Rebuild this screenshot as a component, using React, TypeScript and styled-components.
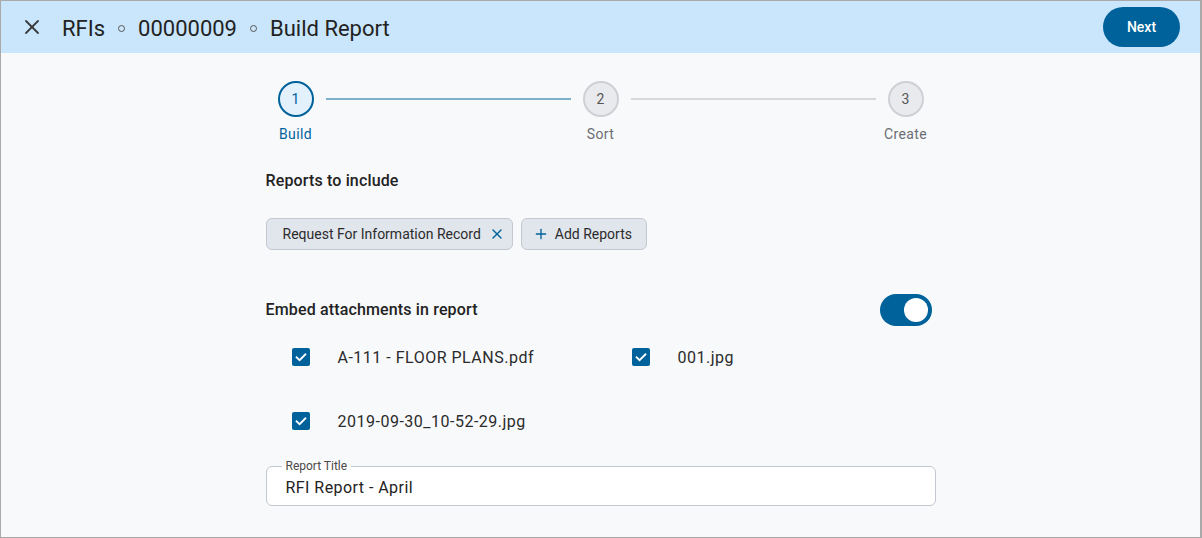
import { createGlobalStyle } from "styled-components"
import styled from "styled-components"
import { Fragment } from "react"
import { X, Plus } from "lucide-react"

const GlobalStyle = createGlobalStyle`
  html, body {
    margin: 0;
    padding: 0;
    background: #ffffff;
  }
  body {
    font-family: Roboto, "Noto Sans", Arial, sans-serif;
    color: #1f1f1f;
  }
  * {
    box-sizing: border-box;
  }
`

const primary = "#00629b"

const Frame = styled.div`
  width: 1202px;
  height: 538px;
  border: 1px solid #a9a9a9;
  border-right-width: 2px;
  background: #f8f9fb;
  display: flex;
  flex-direction: column;
  overflow: hidden;
`

const Header = styled.header`
  height: 52px;
  flex: none;
  background: #cae6fc;
  display: flex;
  align-items: center;
  padding: 0 20px 0 19px;
`

const CloseButton = styled.button`
  border: none;
  background: transparent;
  padding: 0;
  width: 24px;
  height: 24px;
  display: flex;
  align-items: center;
  justify-content: center;
  color: #3a3a3a;
  cursor: pointer;
`

const Breadcrumbs = styled.div`
  display: flex;
  align-items: center;
  gap: 13px;
  margin-left: 18px;
  margin-top: 2px;
  font-size: 22px;
  color: #222;
  flex: 1;
`

const Dot = styled.span`
  width: 7px;
  height: 7px;
  border-radius: 50%;
  border: 1.5px solid #555;
`

const NextButton = styled.button`
  height: 40px;
  width: 77px;
  border: none;
  border-radius: 20px;
  background: ${primary};
  color: #fff;
  font-family: inherit;
  font-size: 14px;
  font-weight: 500;
  cursor: pointer;
`

const Body = styled.main`
  flex: 1;
  display: flex;
  justify-content: center;
  padding-top: 28px;
`

const Column = styled.div`
  width: 670px;
  display: flex;
  flex-direction: column;
`

const Stepper = styled.div`
  display: flex;
  align-items: flex-start;
`

const Step = styled.div`
  width: 60px;
  display: flex;
  flex-direction: column;
  align-items: center;
`

const StepCircle = styled.div<{ $active?: boolean }>`
  width: 36px;
  height: 36px;
  border-radius: 50%;
  display: flex;
  align-items: center;
  justify-content: center;
  font-size: 14px;
  border: 2px solid ${p => (p.$active ? primary : "#cdd0d5")};
  background: ${p => (p.$active ? "#e3f1fd" : "#e9eaed")};
  color: ${p => (p.$active ? primary : "#555")};
`

const StepLabel = styled.div<{ $active?: boolean }>`
  margin-top: 7px;
  font-size: 14px;
  line-height: 20px;
  letter-spacing: 0.4px;
  color: ${p => (p.$active ? primary : "#6b6d72")};
`

const Connector = styled.div<{ $done?: boolean }>`
  flex: 1;
  height: 2px;
  margin-top: 17px;
  background: ${p => (p.$done ? "#7fb0c9" : "#d6d7da")};
`

const SectionTitle = styled.div`
  font-size: 16px;
  font-weight: 500;
  line-height: 24px;
  letter-spacing: 0.15px;
  color: #222;
`

const ReportsTitle = styled(SectionTitle)`
  margin-top: 25px;
`

const ChipRow = styled.div`
  display: flex;
  gap: 8px;
  margin-top: 25px;
`

const Chip = styled.div<{ $lead?: boolean }>`
  height: 32px;
  display: flex;
  align-items: center;
  gap: ${p => (p.$lead ? "6px" : "8px")};
  padding: ${p => (p.$lead ? "0 14px 0 11px" : "0 7px 0 16px")};
  background: #e1e5ec;
  border: 1px solid #c3c7cf;
  border-radius: 6px;
  font-size: 14px;
  color: #2b2b2b;
`

const ChipIcon = styled.span`
  display: flex;
  color: ${primary};
`

const EmbedRow = styled.div`
  display: flex;
  align-items: center;
  justify-content: space-between;
  margin-top: 44px;
  padding-right: 4px;
`

const Toggle = styled.div`
  width: 52px;
  height: 32px;
  border-radius: 16px;
  background: ${primary};
  display: flex;
  align-items: center;
  justify-content: flex-end;
  padding-right: 4px;
`

const Knob = styled.div`
  width: 24px;
  height: 24px;
  border-radius: 50%;
  background: #fff;
`

const Attachments = styled.div`
  display: grid;
  grid-template-columns: 340px 340px;
  row-gap: 16px;
  margin-top: 7px;
`

const Attachment = styled.label`
  height: 48px;
  display: flex;
  align-items: center;
  padding-left: 26px;
  font-size: 16px;
  letter-spacing: 0.5px;
  color: #2b2b2b;
`

const Box = styled.span`
  width: 18px;
  height: 18px;
  border-radius: 2px;
  background: ${primary};
  display: flex;
  align-items: center;
  justify-content: center;
  margin-right: 28px;
  flex: none;
`

const Field = styled.div`
  position: relative;
  margin-top: 21px;
  height: 40px;
  border: 1px solid #c3c7cf;
  border-radius: 6px;
  background: #fff;
  display: flex;
  align-items: center;
  padding: 0 19px;
`

const FieldLabel = styled.span`
  position: absolute;
  top: -8px;
  left: 15px;
  padding: 0 4px;
  font-size: 12px;
  line-height: 14px;
  color: #4a4a4a;
  background: linear-gradient(to bottom, #f8f9fb 50%, #fff 50%);
`

const FieldInput = styled.input`
  border: none;
  outline: none;
  background: transparent;
  width: 100%;
  font-family: inherit;
  font-size: 16px;
  letter-spacing: 0.45px;
  color: #222;
  padding: 0;
  margin-top: 2px;
`

const Check = () => (
  <svg width="14" height="14" viewBox="0 0 24 24" fill="none" stroke="#fff" strokeWidth="3.2" strokeLinecap="square">
    <path d="M4.5 12.5l5 5 10-10" />
  </svg>
)

const steps = [
  { n: 1, label: "Build" },
  { n: 2, label: "Sort" },
  { n: 3, label: "Create" },
]

const files = ["A-111 - FLOOR PLANS.pdf", "001.jpg", "2019-09-30_10-52-29.jpg"]

export default function App() {
  return (
    <>
      <GlobalStyle />
      <Frame>
        <Header>
          <CloseButton aria-label="close">
            <X size={24} strokeWidth={1.8} />
          </CloseButton>
          <Breadcrumbs>
            <span>RFIs</span>
            <Dot />
            <span>00000009</span>
            <Dot />
            <span>Build Report</span>
          </Breadcrumbs>
          <NextButton>Next</NextButton>
        </Header>
        <Body>
          <Column>
            <Stepper>
              {steps.map((s, i) => (
                <Fragment key={s.n}>
                  {i > 0 && <Connector $done={i === 1} />}
                  <Step>
                    <StepCircle $active={i === 0}>{s.n}</StepCircle>
                    <StepLabel $active={i === 0}>{s.label}</StepLabel>
                  </Step>
                </Fragment>
              ))}
            </Stepper>
            <ReportsTitle>Reports to include</ReportsTitle>
            <ChipRow>
              <Chip>
                Request For Information Record
                <ChipIcon><X size={16} strokeWidth={2} /></ChipIcon>
              </Chip>
              <Chip $lead>
                <ChipIcon><Plus size={16} strokeWidth={2} /></ChipIcon>
                Add Reports
              </Chip>
            </ChipRow>
            <EmbedRow>
              <SectionTitle>Embed attachments in report</SectionTitle>
              <Toggle><Knob /></Toggle>
            </EmbedRow>
            <Attachments>
              {files.map(f => (
                <Attachment key={f}>
                  <Box><Check /></Box>
                  {f}
                </Attachment>
              ))}
            </Attachments>
            <Field>
              <FieldLabel>Report Title</FieldLabel>
              <FieldInput defaultValue="RFI Report - April" />
            </Field>
          </Column>
        </Body>
      </Frame>
    </>
  )
}
